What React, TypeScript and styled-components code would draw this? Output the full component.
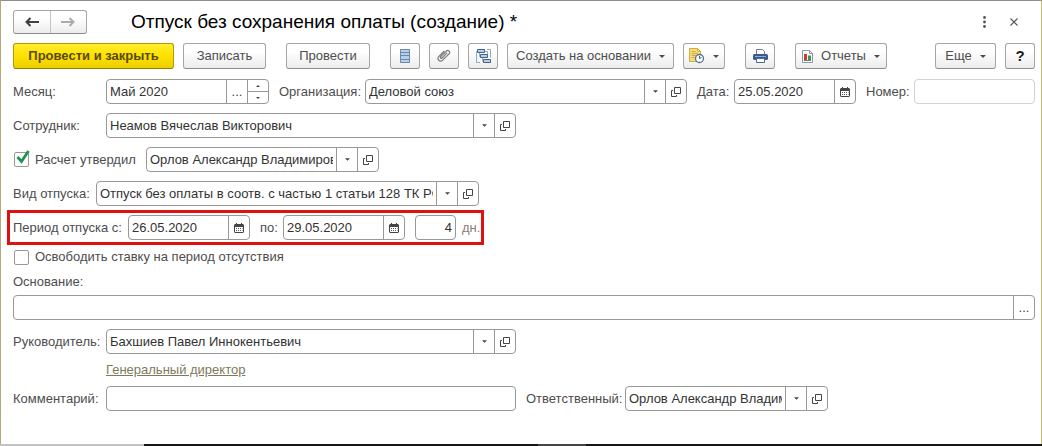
import React, { useState } from 'react';
import styled, { createGlobalStyle, css } from 'styled-components';

const GlobalStyle = createGlobalStyle`
  *, *::before, *::after { box-sizing: border-box; }
  body {
    margin: 0;
    background: #fff;
    font-family: "Liberation Sans", Arial, sans-serif;
    font-size: 13px;
    line-height: 16px;
    color: #4d4d4d;
  }
  button, input { font: inherit; color: inherit; margin: 0; }
  button { cursor: pointer; }
`;

const Page = styled.div`
  display: flex;
  flex-direction: column;
  min-height: 100vh;
`;

const Window = styled.main`
  flex: 1;
  padding: 9px 6px 12px 12px;
  border-top: 1px solid #8f8f8f;
  border-left: 1px solid #b5a97c;
  border-right: 1px solid #c9bf6c;
  background: #fff;
`;

const TitleBar = styled.header`
  display: flex;
  align-items: center;
  height: 24px;
`;

const raised = css`
  border: 1px solid #a6a6a6;
  border-bottom-color: #8c8c8c;
  border-radius: 3px;
  background: linear-gradient(#fff 30%, #ececec);
`;

const NavGroup = styled.nav`
  display: flex;
  width: 74px;
  height: 24px;
  ${raised}
`;

const NavButton = styled.button`
  display: flex;
  flex: 1;
  align-items: center;
  justify-content: center;
  padding: 0;
  border: 0;
  background: none;
  color: #404040;
  & + & { border-left: 1px solid #c4c4c4; }
  &:disabled { color: #ababab; }
`;

const Title = styled.h1`
  flex: 1;
  margin: 0 0 0 44px;
  font-size: 19px;
  line-height: 24px;
  font-weight: 400;
  color: #000;
  white-space: nowrap;
`;

const GhostButton = styled.button`
  display: flex;
  align-items: center;
  justify-content: center;
  width: 30px;
  height: 24px;
  padding: 0;
  border: 0;
  background: none;
  color: #555;
`;

const WindowControls = styled.div`
  display: flex;
  margin-right: 6px;
`;

const Toolbar = styled.div`
  display: flex;
  align-items: center;
  gap: 20px;
  margin: 9px 0 10px;
`;

const ToolGroup = styled.div<{ $end?: boolean }>`
  display: flex;
  gap: 9px;
  margin-left: ${(p) => (p.$end ? 'auto' : '0')};
`;

const ToolButton = styled.button<{ $width: number; $primary?: boolean }>`
  display: flex;
  align-items: center;
  justify-content: center;
  gap: 8px;
  width: ${(p) => p.$width}px;
  height: 26px;
  padding: 0;
  white-space: nowrap;
  ${raised}
  ${(p) =>
    p.$primary &&
    css`
      border-color: #b39b00;
      border-bottom-color: #8f7c00;
      background: linear-gradient(#ffed2e, #ffe100 50%, #ecce00);
      color: #584a00;
      font-weight: 700;
    `}
`;

const HelpMark = styled.span`
  font-size: 15px;
  font-weight: 700;
  color: #1a1a1a;
`;

const Form = styled.form`
  display: flex;
  flex-direction: column;
  gap: 9px;
`;

const Row = styled.div`
  display: flex;
  align-items: center;
  height: 25px;
`;

const HighlightRow = styled(Row)`
  align-self: flex-start;
  box-sizing: content-box;
  margin: -5px -6px;
  padding: 2px 1px 2px 3px;
  border: 3px solid #e01010;
`;

const CheckRow = styled.div`
  display: flex;
  align-items: center;
  height: 16px;
`;

const Stack = styled.div`
  display: flex;
  flex-direction: column;
  gap: 5px;
`;

const Label = styled.label<{ $width?: number; $after?: boolean }>`
  flex: none;
  width: ${(p) => (p.$width ? `${p.$width}px` : 'auto')};
  margin-left: ${(p) => (p.$after ? '10px' : '0')};
  white-space: nowrap;
`;

const FieldBox = styled.div<{ $width?: number; $muted?: boolean; $gap?: boolean }>`
  display: flex;
  flex: ${(p) => (p.$width ? '0 1 auto' : '1')};
  width: ${(p) => (p.$width ? `${p.$width}px` : 'auto')};
  min-width: 0;
  height: 25px;
  margin-left: ${(p) => (p.$gap ? '10px' : '0')};
  border: 1px solid ${(p) => (p.$muted ? '#d2d2d2' : '#989898')};
  border-radius: 4px;
  background: #fff;
  overflow: hidden;
`;

const Input = styled.input<{ $right?: boolean }>`
  flex: 1;
  min-width: 0;
  width: 0;
  padding: 0 3px;
  border: 0;
  outline: 0;
  background: none;
  color: #333;
  text-align: ${(p) => (p.$right ? 'right' : 'left')};
`;

const SideButton = styled.button`
  display: flex;
  flex: none;
  align-items: center;
  justify-content: center;
  width: 21px;
  padding: 0;
  border: 0;
  border-left: 1px solid #989898;
  background: none;
  color: #444;
`;

const Spinner = styled.div`
  display: flex;
  flex: none;
  flex-direction: column;
  width: 21px;
  border-left: 1px solid #989898;
`;

const SpinButton = styled.button`
  display: flex;
  flex: 1;
  align-items: center;
  justify-content: center;
  padding: 0;
  border: 0;
  background: none;
  color: #444;
  & + & { border-top: 1px solid #989898; }
`;

const CheckBox = styled.span`
  position: relative;
  display: flex;
  flex: none;
  width: 15px;
  height: 15px;
  margin: 0 6px 0 1px;
  input {
    appearance: none;
    width: 15px;
    height: 15px;
    border: 1px solid #989898;
    border-radius: 2px;
    background: #fff;
  }
  svg {
    position: absolute;
    left: 2px;
    top: -2px;
    pointer-events: none;
  }
`;

const Unit = styled.span`
  margin-left: 6px;
  color: #8a8072;
`;

const PositionLink = styled.a`
  align-self: flex-start;
  margin-left: 93px;
  line-height: 14px;
  color: #7d7a5c;
`;

const Taskbar = styled.footer`
  display: flex;
  height: 2px;
  background: #161616;
`;

const TaskbarPart = styled.span<{ $width: number; $tone: string }>`
  width: ${(p) => p.$width}px;
  background: ${(p) => p.$tone};
`;

const TaskbarGap = styled.span`
  width: 394px;
`;

const Arrow = ({ back }: { back?: boolean }) => (
  <svg width="14" height="10" viewBox="0 0 14 10" fill="none" stroke="currentColor" strokeWidth="2">
    {back ? <path d="M14 5H2M5.500 1l-4 4 4 4" /> : <path d="M0 5h12M8.500 1l4 4-4 4" />}
  </svg>
);

const Caret = ({ small }: { small?: boolean }) => (
  <svg width={small ? 5 : 6} height="3" viewBox="0 0 6 3" fill="currentColor">
    <path d="M0 0h6L3 3z" />
  </svg>
);

const SpinMark = ({ up }: { up?: boolean }) => (
  <svg width="4" height="2" viewBox="0 0 4 2" fill="currentColor">
    <path d={up ? 'M0 2h4L2 0z' : 'M0 0h4L2 2z'} />
  </svg>
);

const OpenIcon = () => (
  <svg width="10" height="10" viewBox="0 0 10 10" fill="none" stroke="currentColor">
    <path d="M3.500.5h6v6h-6zM2 3.500H.5v6h5V8" />
  </svg>
);

const CalendarIcon = () => (
  <svg width="10" height="10" viewBox="0 0 10 10">
    <path fill="#444" d="M1 1h1V0h1v1h4V0h1v1h1l1 1v7L9 10H1L0 9V2z" />
    <path fill="#fff" d="M1 4h8v5H1z" />
    <path fill="#555" d="M2 5h1v1H2zM4 5h1v1H4zM6 5h1v1H6zM8 5h.5v1H8zM2 7h1v1H2zM4 7h1v1H4zM6 7h1v1H6zM8 7h.5v1H8z" />
  </svg>
);

const ListIcon = () => (
  <svg width="10" height="14" viewBox="0 0 10 14">
    <path fill="#b5d0e8" d="M0 0h10v14H0z" />
    <path fill="none" stroke="#6a8aab" d="M.5.5h9v13h-9zM0 3.500h10M0 6.500h10M0 10.500h10" />
  </svg>
);

const ClipIcon = () => (
  <svg width="14" height="14" viewBox="0 0 14 14" fill="none" stroke="#777" strokeWidth="1.200" strokeLinecap="round">
    <path d="M9.800 4.200 5 9c-.9.900-2.300-.4-1.400-1.300l5.600-5.500c2-1.900 4.700.7 2.800 2.700l-6.300 6.200c-2.700 2.700-6.500-1.100-3.800-3.800L7 2.300" />
  </svg>
);

const StructureIcon = () => (
  <svg width="15" height="14" viewBox="0 0 15 14">
    <path fill="none" stroke="#8fa9c2" d="M2 2.500H.5v11H4M11 .5h3.500v8M3.500 4v3.500H5M6.500 9v3H8M9 2.500h2.500V5" />
    <path fill="#b5d0e8" stroke="#40658c" d="M1.500.5h7v3h-7zM4.500 5.500h7v3h-7zM7.500 10.500h7v3h-7z" />
  </svg>
);

const DocClockIcon = () => (
  <svg width="16" height="16" viewBox="0 0 16 16">
    <path fill="#f7dd78" stroke="#d0ac45" d="M.5.500h8l3 3v10H.5z" />
    <path stroke="#cfa84a" d="M2.500 3.500h4M2.500 5.500h6M2.500 7.500h5M2.500 9.500h3" />
    <path fill="#fff7d8" stroke="#d0ac45" d="M8.500.500v3h3z" />
    <circle cx="10.500" cy="10.500" r="4" fill="#fff" stroke="#55728f" strokeWidth="1.300" />
    <path fill="none" stroke="#2f5f94" d="M10.500 8v2.500l2-1" />
  </svg>
);

const PrinterIcon = () => (
  <svg width="15" height="14" viewBox="0 0 15 14">
    <path fill="#fff" stroke="#6c7c92" d="M3.500.500h6l2 2v4h-8z" />
    <rect x="0" y="5" width="15" height="6" rx="1.500" fill="#3c5a8c" />
    <path fill="#8fabd2" d="M2 7h11v1H2z" />
    <path fill="#fff" stroke="#4f668b" d="M3.500 9.500h8v4h-8z" />
  </svg>
);

const ReportIcon = () => (
  <svg width="11" height="13" viewBox="0 0 11 13">
    <path fill="#fff" stroke="#8b95a3" d="M.5.500h7l3 3v9H.5z" />
    <path fill="none" stroke="#8b95a3" d="M7.500.500v3h3" />
    <path fill="#d03a2c" d="M2 4h3v6H2z" />
    <path fill="#3c9a44" d="M6 5.500h3V10H6z" />
    <path stroke="#777" d="M2 10.500h7" />
  </svg>
);

const DotsIcon = () => (
  <svg width="3" height="12" viewBox="0 0 3 12" fill="#555">
    <circle cx="1.500" cy="1.500" r="1.400" />
    <circle cx="1.500" cy="6" r="1.400" />
    <circle cx="1.500" cy="10.500" r="1.400" />
  </svg>
);

const CloseIcon = () => (
  <svg width="8" height="8" viewBox="0 0 8 8" stroke="#555" strokeWidth="1.100">
    <path d="M.5.500l7 7M7.500.500l-7 7" />
  </svg>
);

const TickIcon = () => (
  <svg width="14" height="14" viewBox="0 0 14 14" fill="none" stroke="#1f9254" strokeWidth="2.800">
    <path d="M1.500 7l4 4.500 7-10.500" />
  </svg>
);

type FieldProps = {
  id: string;
  value?: string;
  width?: number;
  muted?: boolean;
  right?: boolean;
  gap?: boolean;
  label?: string;
  children?: React.ReactNode;
};

const Field = ({ id, value = '', width, muted, right, gap, label, children }: FieldProps) => (
  <FieldBox $width={width} $muted={muted} $gap={gap}>
    <Input id={id} defaultValue={value} $right={right} aria-label={label} readOnly={muted} />
    {children}
  </FieldBox>
);

const PickAndOpen = () => (
  <>
    <SideButton type="button" aria-label="Выбрать"><Caret small /></SideButton>
    <SideButton type="button" aria-label="Открыть"><OpenIcon /></SideButton>
  </>
);

const CalendarButton = () => (
  <SideButton type="button" aria-label="Календарь"><CalendarIcon /></SideButton>
);

const Check = ({ id, initial }: { id: string; initial: boolean }) => {
  const [on, setOn] = useState(initial);
  return (
    <CheckBox>
      <input id={id} type="checkbox" checked={on} onChange={(e) => setOn(e.target.checked)} />
      {on && <TickIcon />}
    </CheckBox>
  );
};

export default function App() {
  return (
    <Page>
      <GlobalStyle />
      <Window>
        <TitleBar>
          <NavGroup>
            <NavButton aria-label="Назад"><Arrow back /></NavButton>
            <NavButton aria-label="Вперед" disabled><Arrow /></NavButton>
          </NavGroup>
          <Title>Отпуск без сохранения оплаты (создание) *</Title>
          <WindowControls>
            <GhostButton aria-label="Меню"><DotsIcon /></GhostButton>
            <GhostButton aria-label="Закрыть"><CloseIcon /></GhostButton>
          </WindowControls>
        </TitleBar>

        <Toolbar>
          <ToolGroup>
            <ToolButton $width={161} $primary>Провести и закрыть</ToolButton>
            <ToolButton $width={83}>Записать</ToolButton>
          </ToolGroup>
          <ToolGroup>
            <ToolButton $width={84}>Провести</ToolButton>
          </ToolGroup>
          <ToolGroup>
            <ToolButton $width={30} aria-label="Реестр"><ListIcon /></ToolButton>
            <ToolButton $width={30} aria-label="Файлы"><ClipIcon /></ToolButton>
            <ToolButton $width={30} aria-label="Структура"><StructureIcon /></ToolButton>
            <ToolButton $width={167}>Создать на основании<Caret /></ToolButton>
            <ToolButton $width={42} aria-label="Напоминания"><DocClockIcon /><Caret /></ToolButton>
          </ToolGroup>
          <ToolGroup>
            <ToolButton $width={30} aria-label="Печать"><PrinterIcon /></ToolButton>
          </ToolGroup>
          <ToolGroup>
            <ToolButton $width={92}><ReportIcon />Отчеты<Caret /></ToolButton>
          </ToolGroup>
          <ToolGroup $end>
            <ToolButton $width={61}>Еще<Caret /></ToolButton>
            <ToolButton $width={30}><HelpMark>?</HelpMark></ToolButton>
          </ToolGroup>
        </Toolbar>

        <Form onSubmit={(e) => e.preventDefault()}>
          <Row>
            <Label htmlFor="month" $width={93}>Месяц:</Label>
            <Field id="month" value="Май 2020" width={163}>
              <SideButton type="button" aria-label="Выбрать месяц">...</SideButton>
              <Spinner>
                <SpinButton type="button" aria-label="Следующий"><SpinMark up /></SpinButton>
                <SpinButton type="button" aria-label="Предыдущий"><SpinMark /></SpinButton>
              </Spinner>
            </Field>
            <Label htmlFor="org" $width={86} $after>Организация:</Label>
            <Field id="org" value="Деловой союз"><PickAndOpen /></Field>
            <Label htmlFor="date" $width={37} $after>Дата:</Label>
            <Field id="date" value="25.05.2020" width={122}><CalendarButton /></Field>
            <Label htmlFor="number" $width={48} $after>Номер:</Label>
            <Field id="number" width={121} muted />
          </Row>

          <Row>
            <Label htmlFor="employee" $width={93}>Сотрудник:</Label>
            <Field id="employee" value="Неамов Вячеслав Викторович" width={410}><PickAndOpen /></Field>
          </Row>

          <Row>
            <Check id="approved" initial />
            <Label htmlFor="approved" $width={111}>Расчет утвердил</Label>
            <Field id="approver" label="Расчет утвердил" value="Орлов Александр Владимирович" width={233}>
              <PickAndOpen />
            </Field>
          </Row>

          <Row>
            <Label htmlFor="kind" $width={83}>Вид отпуска:</Label>
            <Field id="kind" value="Отпуск без оплаты в соотв. с частью 1 статьи 128 ТК РФ" width={383}>
              <PickAndOpen />
            </Field>
          </Row>

          <HighlightRow>
            <Label htmlFor="from" $width={115}>Период отпуска с:</Label>
            <Field id="from" value="26.05.2020" width={122}><CalendarButton /></Field>
            <Label htmlFor="to" $width={23} $after>по:</Label>
            <Field id="to" value="29.05.2020" width={122}><CalendarButton /></Field>
            <Field id="days" label="Количество дней" value="4" width={41} right gap />
            <Unit>дн.</Unit>
          </HighlightRow>

          <CheckRow>
            <Check id="release" initial={false} />
            <Label htmlFor="release">Освободить ставку на период отсутствия</Label>
          </CheckRow>

          <Stack>
            <Label htmlFor="reason">Основание:</Label>
            <Row>
              <Field id="reason">
                <SideButton type="button" aria-label="Выбрать основание">...</SideButton>
              </Field>
            </Row>
          </Stack>

          <Row>
            <Label htmlFor="head" $width={93}>Руководитель:</Label>
            <Field id="head" value="Бахшиев Павел Иннокентьевич" width={410}><PickAndOpen /></Field>
          </Row>

          <PositionLink href="#position">Генеральный директор</PositionLink>

          <Row>
            <Label htmlFor="comment" $width={93}>Комментарий:</Label>
            <Field id="comment" width={410} />
            <Label htmlFor="responsible" $width={99} $after>Ответственный:</Label>
            <Field id="responsible" value="Орлов Александр Владимирович" width={203}>
              <PickAndOpen />
            </Field>
          </Row>
        </Form>
      </Window>
      <Taskbar>
        <TaskbarPart $width={144} $tone="#c4c4c4" />
        <TaskbarGap />
        <TaskbarPart $width={48} $tone="#444" />
      </Taskbar>
    </Page>
  );
}
